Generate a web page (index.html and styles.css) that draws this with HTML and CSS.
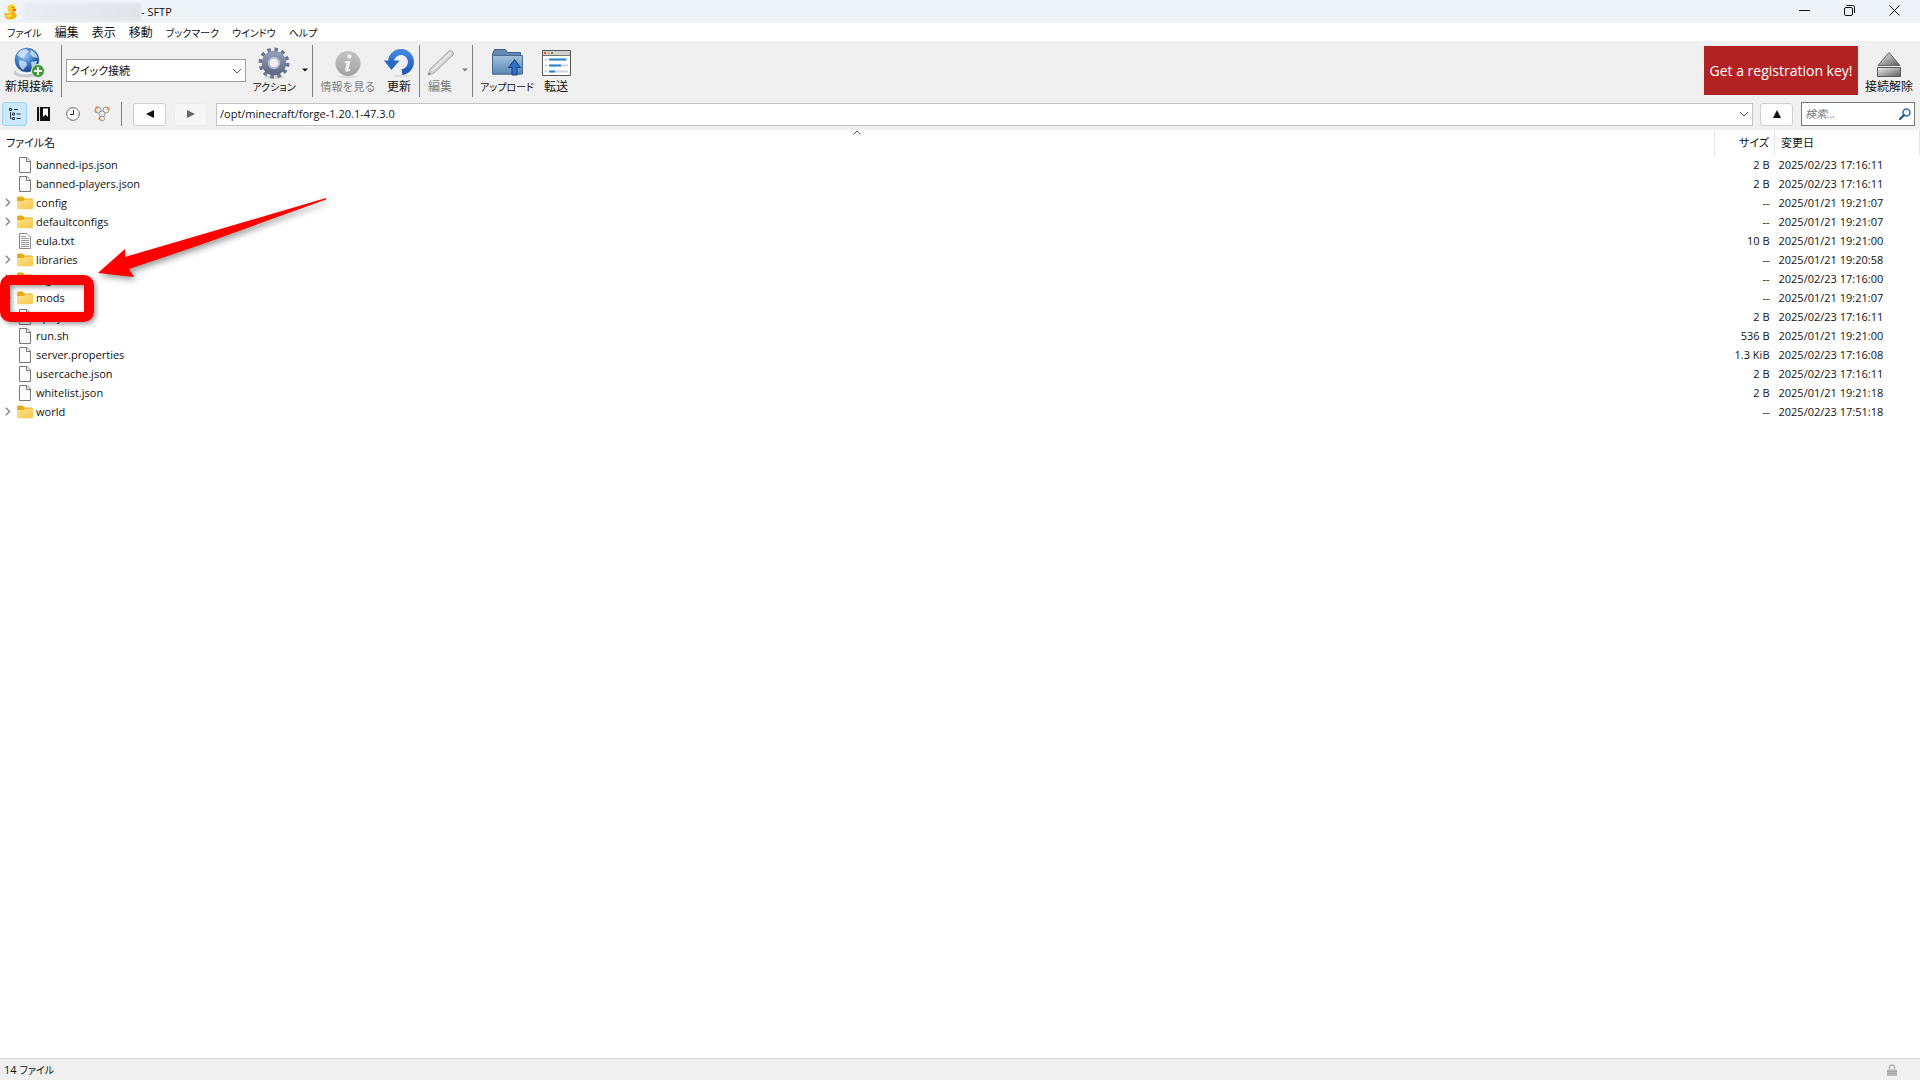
FILE: index.html
```html
<!DOCTYPE html>
<html lang="ja">

<head>
  <meta charset="UTF-8">
  <meta name="viewport" content="width=device-width, initial-scale=1.0">
  <title>SFTP</title>
  <link rel="stylesheet" href="styles.css">
</head>

<body>
  <!-- shared icons -->
  <svg class="sprite" aria-hidden="true">
    <defs>
      <linearGradient id="folder-fill" x1="0" y1="0" x2="1" y2="1">
        <stop offset="0" stop-color="#ffe28a" />
        <stop offset="1" stop-color="#f6c64c" />
      </linearGradient>
      <linearGradient id="gray-fill" x1="0" y1="0" x2="0" y2="1">
        <stop offset="0" stop-color="#c4c4c4" />
        <stop offset="1" stop-color="#a2a2a2" />
      </linearGradient>
      <linearGradient id="blue-fill" x1="0" y1="0" x2="0" y2="1">
        <stop offset="0" stop-color="#3f86df" />
        <stop offset="1" stop-color="#2158b5" />
      </linearGradient>
      <linearGradient id="upload-fill" x1="0" y1="0" x2="0" y2="1">
        <stop offset="0" stop-color="#a3c2dc" />
        <stop offset="1" stop-color="#5a87b4" />
      </linearGradient>
      <linearGradient id="gear-fill" x1="0" y1="0" x2="0" y2="1">
        <stop offset="0" stop-color="#8f9ab3" />
        <stop offset="1" stop-color="#636d87" />
      </linearGradient>
      <linearGradient id="eject-fill" x1="0" y1="0" x2="1" y2="1">
        <stop offset="0" stop-color="#f2f2f2" />
        <stop offset="1" stop-color="#5c5c5c" />
      </linearGradient>
      <radialGradient id="globe-fill" cx="0.4" cy="0.3" r="0.75">
        <stop offset="0" stop-color="#a9d2f5" />
        <stop offset="0.5" stop-color="#3d7fc8" />
        <stop offset="1" stop-color="#123a7c" />
      </radialGradient>
    </defs>
    <symbol id="folder" viewBox="0 0 16 14">
      <path d="M0 2q0-1.500 1.500-1.500h4L7.500 2.500H14.500q1.500 0 1.500 1.500V8H0z" fill="#e9a90f" />
      <path d="M0 5h6l2-1.500h7q1 0 1 1V12q0 1.300-1.300 1.300H1.300Q0 13.300 0 12z" fill="url(#folder-fill)" />
    </symbol>
    <symbol id="file" viewBox="0 0 12 16">
      <path d="M.5.500h7.500L11.500 4v11.500H.5z" fill="#fbfbfb" stroke="#777" />
      <path d="M7.500.500V4.500h4" fill="none" stroke="#777" />
    </symbol>
    <symbol id="text-file" viewBox="0 0 12 16">
      <path d="M.5.500h7.500L11.500 4v11.500H.5z" fill="#fbfbfb" stroke="#888" />
      <path d="M2 3.500h5M2 5.500h8M2 7.500h8M2 9.500h8M2 11.500h8M2 13.500h8" stroke="#999" />
    </symbol>
    <symbol id="expand" viewBox="0 0 6 9">
      <path d="M.8.800L4.600 4.500.8 8.200" fill="none" stroke="#888" stroke-width="1.500" />
    </symbol>
    <symbol id="chevron" viewBox="0 0 10 6">
      <path d="M1 1l4 4 4-4" fill="none" stroke="#555" />
    </symbol>
    <symbol id="caret" viewBox="0 0 6 4">
      <path d="M0 .5h6L3 3.500z" fill="currentColor" />
    </symbol>
  </svg>

  <header class="titlebar">
    <svg class="titlebar__logo" viewBox="0 0 13 16">
      <path d="M9.500 7.500q3.500 2 3 5-1.500 3-6 3-5.500 0-6-4-.5-2 .5-3 1 1.500 4 .5z" fill="#f0b30f" />
      <circle cx="7.500" cy="4.500" r="4" fill="#f8cb2a" />
      <path d="M1 10q3 2 6-.5 2 2.500-1 4-4 .5-5-3.500z" fill="#fbdb52" />
      <path d="M12.500 5.500q-2-1.500-4 0l.5 2q2.500.5 3.500-2z" fill="#e8641a" />
      <circle cx="9" cy="3.500" r=".6" fill="#333" />
    </svg>
    <span class="titlebar__host"></span>
    <h1 class="titlebar__name">- SFTP</h1>
    <div class="titlebar__controls">
      <button class="titlebar__button" type="button" aria-label="最小化">
        <svg width="11" height="11" viewBox="0 0 11 11"><path d="M0 5.500h11" stroke="#111" /></svg>
      </button>
      <button class="titlebar__button" type="button" aria-label="元に戻す">
        <svg width="11" height="11" viewBox="0 0 11 11" fill="none" stroke="#111">
          <rect x=".5" y="2.500" width="8" height="8" rx="1.500" />
          <path d="M2.500.500H8.500q2 0 2 2V8" />
        </svg>
      </button>
      <button class="titlebar__button" type="button" aria-label="閉じる">
        <svg width="11" height="11" viewBox="0 0 11 11"><path d="M.5.500l10 10M10.500.500l-10 10" stroke="#111" /></svg>
      </button>
    </div>
  </header>

  <nav class="menu">
    <button class="menu__item menu__item--kana" type="button">ファイル</button>
    <button class="menu__item" type="button">編集</button>
    <button class="menu__item" type="button">表示</button>
    <button class="menu__item" type="button">移動</button>
    <button class="menu__item menu__item--kana" type="button">ブックマーク</button>
    <button class="menu__item menu__item--kana" type="button">ウインドウ</button>
    <button class="menu__item menu__item--kana" type="button">ヘルプ</button>
  </nav>

  <div class="toolbar">
    <button class="tool tool--connect" type="button">
      <svg class="tool__icon" viewBox="0 0 32 32">
        <ellipse cx="13" cy="26" rx="12.500" ry="4.500" fill="#c9ccd0" />
        <ellipse cx="12" cy="24.500" rx="9" ry="3" fill="#eef0f2" />
        <circle cx="14" cy="13" r="12" fill="url(#globe-fill)" stroke="#456a9a" stroke-width=".5" />
        <path d="M4 8q3-6 9-6l3 3-4 2-1 4-4-1zM18 3q5 2 7 8l-5-1-3-3zM6 13l7 2 1 3-4 5q-5-4-4-10zM18 15l6-1q-1 6-5 8z" fill="#dcecf9" opacity=".75" />
        <circle cx="25" cy="24" r="6.500" fill="#3f9a3a" stroke="#e3efe2" />
        <path d="M25 20v8M21 24h8" stroke="#fff" stroke-width="2" />
      </svg>
      <span class="tool__label">新規接続</span>
    </button>
    <span class="separator"></span>
    <div class="combo combo--quick">
      <select class="combo__select" aria-label="クイック接続">
        <option>クイック接続</option>
      </select>
      <svg class="combo__chevron"><use href="#chevron" /></svg>
    </div>
    <button class="tool tool--action" type="button">
      <svg class="tool__icon" viewBox="0 0 32 32">
        <ellipse cx="16" cy="30" rx="10" ry="2" fill="#d6d6d6" />
        <circle cx="16" cy="16" r="13.500" fill="none" stroke="#6a7591" stroke-width="4" stroke-dasharray="3.534 3.534" />
        <circle cx="16" cy="16" r="8.500" fill="none" stroke="url(#gear-fill)" stroke-width="7.500" />
        <circle cx="16" cy="16" r="5.500" fill="none" stroke="#b5bed0" stroke-width="1.500" />
      </svg>
      <span class="tool__label tool__label--kana">アクション</span>
    </button>
    <button class="dropper" type="button" aria-label="アクションのメニュー"><svg class="dropper__icon"><use href="#caret" /></svg></button>
    <span class="separator"></span>
    <button class="tool tool--info" type="button" disabled>
      <svg class="tool__icon" viewBox="0 0 32 32">
        <ellipse cx="16" cy="29.500" rx="10" ry="1.500" fill="#dedede" />
        <circle cx="16" cy="16.500" r="12.500" fill="url(#gray-fill)" />
        <circle cx="17.500" cy="9.500" r="2.200" fill="#f0f0f0" />
        <path d="M13 14h5.500l-2 8.500 2-.5-.5 2q-5 2-5-1l1.500-7h-2z" fill="#f0f0f0" />
      </svg>
      <span class="tool__label">情報を見る</span>
    </button>
    <button class="tool tool--refresh" type="button">
      <svg class="tool__icon" viewBox="0 0 32 32">
        <ellipse cx="19" cy="29" rx="9" ry="1.500" fill="#dedede" />
        <path d="M8 14A10 10 0 1 1 19 25" fill="none" stroke="url(#blue-fill)" stroke-width="6" />
        <path d="M1 13.500h15.500l-8 9.500z" fill="#2b68c5" />
      </svg>
      <span class="tool__label">更新</span>
    </button>
    <span class="separator"></span>
    <button class="tool tool--edit" type="button" disabled>
      <svg class="tool__icon" viewBox="0 0 32 32">
        <path d="M4 28l2-6L25 4q2-1 3.500.5T29 8L10 26z" fill="#d2d2d2" stroke="#ababab" />
        <path d="M8 24L26.500 6" stroke="#efefef" stroke-width="1.500" />
        <path d="M4 28l1-3 2 2z" fill="#888" />
      </svg>
      <span class="tool__label">編集</span>
    </button>
    <button class="dropper" type="button" aria-label="編集のメニュー" disabled><svg class="dropper__icon"><use href="#caret" /></svg></button>
    <span class="separator"></span>
    <button class="tool tool--upload" type="button">
      <svg class="tool__icon" viewBox="0 0 32 32">
        <path d="M1.500 27V7l2-4.500h11l2 3h13V27z" fill="#6489b2" stroke="#3e6087" />
        <path d="M1.500 8.500h30V27h-30z" fill="url(#upload-fill)" stroke="#466b92" />
        <path d="M23.500 12.500l6 8h-3.500V28h-5v-7.500h-3.500z" fill="#2f6fc4" stroke="#173f7e" />
      </svg>
      <span class="tool__label tool__label--kana">アップロード</span>
    </button>
    <button class="tool tool--transfer" type="button">
      <svg class="tool__icon" viewBox="0 0 32 32">
        <path d="M2.500 3.500h28v25h-28z" fill="#fff" stroke="#555" />
        <path d="M3 4h27v4H3z" fill="#cfcfcf" />
        <path d="M3 8.500h27" stroke="#777" />
        <path d="M4 5h2v2H4z" fill="#e34b42" />
        <path d="M7.500 5h2v2h-2z" fill="#e5ad2c" />
        <path d="M11 5h2v2h-2z" fill="#31a866" />
        <path d="M4.500 12.500h3M4.500 18.500h3M4.500 24.500h3M10 12.500h18M10 18.500h18M10 24.500h18" stroke="#cdd3d9" stroke-width="2" />
        <path d="M9 12.500h17M9 18.500h12M9 24.500h6" stroke="#2b84cf" stroke-width="2" />
      </svg>
      <span class="tool__label">転送</span>
    </button>
    <button class="register" type="button">Get a registration key!</button>
    <button class="tool tool--disconnect" type="button">
      <svg class="tool__icon" viewBox="0 0 32 32">
        <path d="M16 5.500L27 18.500H5z" fill="url(#eject-fill)" stroke="#666" />
        <path d="M4.500 20.500h23v9h-23z" fill="url(#eject-fill)" stroke="#555" />
      </svg>
      <span class="tool__label">接続解除</span>
    </button>
  </div>

  <div class="location">
    <div class="views">
      <button class="views__button views__button--active" type="button" aria-label="ツリー">
        <svg width="14" height="14" viewBox="0 0 14 14" fill="none" stroke="#234">
          <path d="M1.500 1.500h2v2h-2zM4.500 6h2v2h-2zM4.500 10.500h2v2h-2z" />
          <path d="M6 2.500h4M8.500 7h4M8.500 11.500h4M2.500 5v6.500h1" />
        </svg>
      </button>
      <button class="views__button" type="button" aria-label="ブックマーク">
        <svg width="14" height="14" viewBox="0 0 14 14">
          <path d="M0 0h13v14H0z" fill="#111" />
          <path d="M2.500 0v14" stroke="#ddd" />
          <path d="M6 1.500h5V10L8.500 7.500 6 10z" fill="#fff" />
        </svg>
      </button>
      <button class="views__button" type="button" aria-label="履歴">
        <svg width="14" height="14" viewBox="0 0 14 14">
          <circle cx="7" cy="7" r="6.300" fill="#fff" stroke="#666" />
          <path d="M7.500 3v4.500H4" fill="none" stroke="#222" />
        </svg>
      </button>
      <button class="views__button" type="button" aria-label="Bonjour">
        <svg width="16" height="16" viewBox="0 0 16 16" fill="#ececec" stroke="#999">
          <circle cx="4" cy="4" r="3" />
          <circle cx="12" cy="4" r="3" />
          <circle cx="8" cy="8" r="3" />
          <circle cx="8" cy="12.500" r="2.500" />
          <path d="M2 2l2-1M13 1l2 3M5.500 11v3M1 4l1 2" stroke="#e98742" stroke-width="2" />
        </svg>
      </button>
    </div>
    <span class="separator"></span>
    <button class="nav-button nav-button--back" type="button" aria-label="戻る">
      <svg width="8" height="8" viewBox="0 0 8 8"><path d="M0 4l8-4v8z" fill="currentColor" /></svg>
    </button>
    <button class="nav-button nav-button--forward" type="button" aria-label="進む" disabled>
      <svg width="8" height="8" viewBox="0 0 8 8"><path d="M8 4L0 0v8z" fill="currentColor" /></svg>
    </button>
    <div class="combo combo--path">
      <select class="combo__select" aria-label="パス">
        <option>/opt/minecraft/forge-1.20.1-47.3.0</option>
      </select>
      <svg class="combo__chevron"><use href="#chevron" /></svg>
    </div>
    <button class="nav-button nav-button--up" type="button" aria-label="上へ">
      <svg width="8" height="8" viewBox="0 0 8 8"><path d="M4 0l4 8H0z" fill="currentColor" /></svg>
    </button>
    <label class="search">
      <input class="search__input" type="search" placeholder="検索..." aria-label="検索">
      <svg width="12" height="12" viewBox="0 0 12 12" fill="none">
        <circle cx="7.500" cy="4.500" r="3.500" stroke="#2d73b5" stroke-width="1.600" />
        <path d="M5 7L1 11" stroke="#1d4c86" stroke-width="2" stroke-linecap="round" />
      </svg>
    </label>
  </div>

  <main class="browser">
    <table class="files">
      <colgroup>
        <col>
        <col class="files__size-col">
        <col class="files__date-col">
      </colgroup>
      <thead>
        <tr>
          <th class="files__kana">
            ファイル名
            <svg class="files__sort" viewBox="0 0 8 5"><path d="M.5 4.500L4 1l3.500 3.500" fill="none" stroke="#555" /></svg>
          </th>
          <th class="files__kana files__size">サイズ</th>
          <th>変更日</th>
        </tr>
      </thead>
      <tbody>
        <tr>
          <td><div class="entry"><svg class="entry__file"><use href="#file" /></svg>banned-ips.json</div></td>
          <td class="files__size">2 B</td>
          <td class="files__date">2025/02/23 17:16:11</td>
        </tr>
        <tr>
          <td><div class="entry"><svg class="entry__file"><use href="#file" /></svg>banned-players.json</div></td>
          <td class="files__size">2 B</td>
          <td class="files__date">2025/02/23 17:16:11</td>
        </tr>
        <tr>
          <td><div class="entry"><svg class="entry__expand"><use href="#expand" /></svg><svg class="entry__folder"><use href="#folder" /></svg>config</div></td>
          <td class="files__size">--</td>
          <td class="files__date">2025/01/21 19:21:07</td>
        </tr>
        <tr>
          <td><div class="entry"><svg class="entry__expand"><use href="#expand" /></svg><svg class="entry__folder"><use href="#folder" /></svg>defaultconfigs</div></td>
          <td class="files__size">--</td>
          <td class="files__date">2025/01/21 19:21:07</td>
        </tr>
        <tr>
          <td><div class="entry"><svg class="entry__file"><use href="#text-file" /></svg>eula.txt</div></td>
          <td class="files__size">10 B</td>
          <td class="files__date">2025/01/21 19:21:00</td>
        </tr>
        <tr>
          <td><div class="entry"><svg class="entry__expand"><use href="#expand" /></svg><svg class="entry__folder"><use href="#folder" /></svg>libraries</div></td>
          <td class="files__size">--</td>
          <td class="files__date">2025/01/21 19:20:58</td>
        </tr>
        <tr>
          <td><div class="entry"><svg class="entry__expand"><use href="#expand" /></svg><svg class="entry__folder"><use href="#folder" /></svg>logs</div></td>
          <td class="files__size">--</td>
          <td class="files__date">2025/02/23 17:16:00</td>
        </tr>
        <tr>
          <td><div class="entry"><svg class="entry__expand"><use href="#expand" /></svg><svg class="entry__folder"><use href="#folder" /></svg>mods</div></td>
          <td class="files__size">--</td>
          <td class="files__date">2025/01/21 19:21:07</td>
        </tr>
        <tr>
          <td><div class="entry"><svg class="entry__file"><use href="#file" /></svg>ops.json</div></td>
          <td class="files__size">2 B</td>
          <td class="files__date">2025/02/23 17:16:11</td>
        </tr>
        <tr>
          <td><div class="entry"><svg class="entry__file"><use href="#file" /></svg>run.sh</div></td>
          <td class="files__size">536 B</td>
          <td class="files__date">2025/01/21 19:21:00</td>
        </tr>
        <tr>
          <td><div class="entry"><svg class="entry__file"><use href="#file" /></svg>server.properties</div></td>
          <td class="files__size">1.3 KiB</td>
          <td class="files__date">2025/02/23 17:16:08</td>
        </tr>
        <tr>
          <td><div class="entry"><svg class="entry__file"><use href="#file" /></svg>usercache.json</div></td>
          <td class="files__size">2 B</td>
          <td class="files__date">2025/02/23 17:16:11</td>
        </tr>
        <tr>
          <td><div class="entry"><svg class="entry__file"><use href="#file" /></svg>whitelist.json</div></td>
          <td class="files__size">2 B</td>
          <td class="files__date">2025/01/21 19:21:18</td>
        </tr>
        <tr>
          <td><div class="entry"><svg class="entry__expand"><use href="#expand" /></svg><svg class="entry__folder"><use href="#folder" /></svg>world</div></td>
          <td class="files__size">--</td>
          <td class="files__date">2025/02/23 17:51:18</td>
        </tr>
      </tbody>
    </table>

    <div class="marker"></div>
    <svg class="arrow" viewBox="0 0 230 82">
      <path d="M228 1v1.500L102 48 31 72l5 8L0 76l27-24v8L102 38z" fill="#f00" />
    </svg>
  </main>

  <footer class="status">
    <span>14 <span class="status__kana">ファイル</span></span>
    <svg width="10" height="12" viewBox="0 0 10 12">
      <path d="M2.500 6V3.500q0-2.500 2.500-2.500t2.500 2.500V6" fill="none" stroke="#b5b5b5" stroke-width="1.500" />
      <path d="M0 5.500h10V12H0z" fill="#b9b9b9" />
      <path d="M0 7.500h10M0 9.500h10" stroke="#a5a5a5" />
    </svg>
  </footer>
</body>

</html>
```
FILE: styles.css
```css
* {
  box-sizing: border-box;
}

body {
  display: flex;
  flex-direction: column;
  min-height: 100vh;
  margin: 0;
  background-color: #fff;
  color: #111;
  font-family: "Open Sans", "Noto Sans CJK JP", sans-serif;
  font-size: 11px;
  line-height: 16px;
}

button,
input,
select {
  margin: 0;
  padding: 0;
  border: 0;
  outline: none;
  background: none;
  color: inherit;
  font: inherit;
}

svg {
  display: block;
  flex: none;
}

.sprite {
  position: absolute;
  width: 0;
  height: 0;
}

.separator {
  flex: none;
  align-self: stretch;
  width: 1px;
  background-color: #808080;
}

/* Title bar */

.titlebar {
  display: flex;
  align-items: center;
  height: 23px;
  padding: 0 3px 0 4px;
  background-color: #eff4f9;
}

.titlebar__logo {
  width: 13px;
  height: 16px;
}

.titlebar__host {
  width: 117px;
  height: 18px;
  margin-left: 7px;
  background: linear-gradient(90deg, #e9edf2, #e1e4e9);
  filter: blur(1px);
}

.titlebar__name {
  margin: 0;
  font-size: 11px;
  font-weight: 400;
}

.titlebar__controls {
  display: flex;
  align-self: flex-start;
  margin-left: auto;
}

.titlebar__button {
  display: grid;
  place-items: center;
  width: 45px;
  height: 21px;
}

/* Menu */

.menu {
  display: flex;
  gap: 13px;
  height: 18px;
  padding: 1px 0 0 7px;
}

.menu__item {
  font-size: 12px;
  white-space: nowrap;
}

.menu__item--kana {
  font-size: 10px;
  font-feature-settings: "palt";
}

/* Toolbar */

.toolbar {
  display: flex;
  height: 61px;
  padding: 4px 0 5px;
  background-color: #f0f0f0;
}

.tool {
  display: flex;
  flex: none;
  flex-direction: column;
  align-items: center;
  padding-top: 2px;
}

.tool:disabled,
.dropper:disabled {
  color: #808080;
}

.tool__icon {
  width: 32px;
  height: 32px;
}

.tool__label {
  font-size: 12px;
  white-space: nowrap;
}

.tool__label--kana {
  font-size: 10px;
  font-feature-settings: "palt";
}

.tool--connect {
  width: 58px;
  margin-right: 3px;
}

.tool--action {
  width: 52px;
  margin-left: 2px;
}

.tool--info {
  width: 70px;
}

.tool--info .tool__label {
  font-size: 11px;
}

.tool--refresh {
  width: 32px;
  margin-right: 4px;
}

.tool--edit {
  width: 40px;
}

.tool--upload {
  width: 68px;
}

.tool--transfer {
  width: 30px;
}

.tool--disconnect {
  width: 62px;
}

.dropper {
  display: grid;
  place-items: center;
  width: 12px;
  margin-bottom: 2px;
}

.tool + .dropper {
  padding-right: 2px;
}

.register {
  width: 154px;
  height: 49px;
  margin: 1px 0 0 auto;
  background-color: #b22222;
  color: #fff;
  font-size: 14px;
  white-space: nowrap;
}

.dropper__icon {
  width: 6px;
  height: 4px;
}

/* Drop-downs: the chevron lies in the same grid cell as the select */

.combo {
  display: grid;
  align-items: center;
  border: 1px solid #a0a0a0;
  background-color: #fff;
}

.combo__select,
.combo__chevron {
  grid-area: 1 / 1;
}

.combo__select {
  width: 100%;
  height: 100%;
  padding: 0 20px 0 3px;
  appearance: none;
  font-feature-settings: "palt";
}

.combo__chevron {
  justify-self: end;
  width: 10px;
  height: 6px;
  margin-right: 3px;
  pointer-events: none;
}

.combo--quick {
  flex: none;
  align-self: flex-start;
  width: 180px;
  height: 23px;
  margin: 14px 0 0 4px;
}

.combo--path {
  flex: 1;
  height: 23px;
  margin: 0 7px 0 9px;
  border-color: #c4c4c4;
}

/* Location bar */

.location {
  display: flex;
  align-items: center;
  height: 28px;
  padding: 0 5px 4px 2px;
  background-color: #f0f0f0;
}

.views {
  display: flex;
  width: 119px;
  gap: 4px;
}

.views__button {
  display: grid;
  place-items: center;
  width: 25px;
  height: 24px;
  border-radius: 3px;
}

.views__button--active {
  border: 1px solid #99d1ff;
  background-color: #cce8ff;
}

.nav-button {
  display: grid;
  place-items: center;
  flex: none;
  width: 33px;
  height: 23px;
  border: 1px solid #d0d0d0;
  border-radius: 3px;
  background-color: #fdfdfd;
}

.nav-button:disabled {
  border-color: #ececec;
  background-color: #f6f6f6;
  color: #666;
}

.nav-button--back {
  margin: 0 8px 0 11px;
}

.search {
  display: flex;
  align-items: center;
  flex: none;
  width: 114px;
  height: 24px;
  margin-left: 8px;
  padding: 0 3px;
  border: 1px solid #7a7a7a;
  background-color: #fff;
}

.search__input {
  flex: 1;
  min-width: 0;
  font-style: italic;
}

.search__input::placeholder {
  color: #808080;
}

/* File list */

.browser {
  position: relative;
  flex: 1;
}

.files {
  width: 100%;
  table-layout: fixed;
  border-collapse: collapse;
}

.files__size-col {
  width: 60px;
}

.files__date-col {
  width: 145px;
}

.files th {
  position: relative;
  height: 25px;
  padding: 0 6px;
  border-right: 1px solid #e5e5e5;
  font-weight: 400;
  text-align: left;
}

.files td {
  height: 19px;
  padding: 0;
  white-space: nowrap;
}

.files .files__kana {
  font-feature-settings: "palt";
}

.files .files__size {
  padding: 0 5px 0 0;
  text-align: right;
}

.files .files__date {
  padding-left: 4px;
}

.files__sort {
  position: absolute;
  top: 0;
  left: 50%;
  width: 8px;
  height: 5px;
  margin-left: -4px;
}

.entry {
  display: flex;
  align-items: center;
  height: 19px;
}

.entry__expand {
  width: 6px;
  height: 9px;
  margin: 0 6px 0 5px;
}

.entry__folder {
  width: 16px;
  height: 14px;
  margin-right: 3px;
}

.entry__file {
  width: 12px;
  height: 16px;
  margin: 0 5px 0 19px;
}

/* Red highlight over the mods folder */

.marker {
  position: absolute;
  top: 145px;
  left: 0;
  width: 94px;
  height: 47px;
  border: 10px solid #f00;
  border-radius: 10px;
  box-shadow: 2px 2px 5px #0006, inset 2px 2px 5px #0006;
}

.arrow {
  position: absolute;
  top: 67px;
  left: 98px;
  width: 230px;
  height: 82px;
  overflow: visible;
  filter: drop-shadow(2px 3px 3px #0006);
}

/* Status bar */

.status {
  display: flex;
  align-items: center;
  justify-content: space-between;
  height: 22px;
  padding: 0 23px 0 4px;
  border-top: 1px solid #d5d5d5;
  background-color: #f0f0f0;
}

.status__kana {
  font-size: 10px;
  font-feature-settings: "palt";
}
```
